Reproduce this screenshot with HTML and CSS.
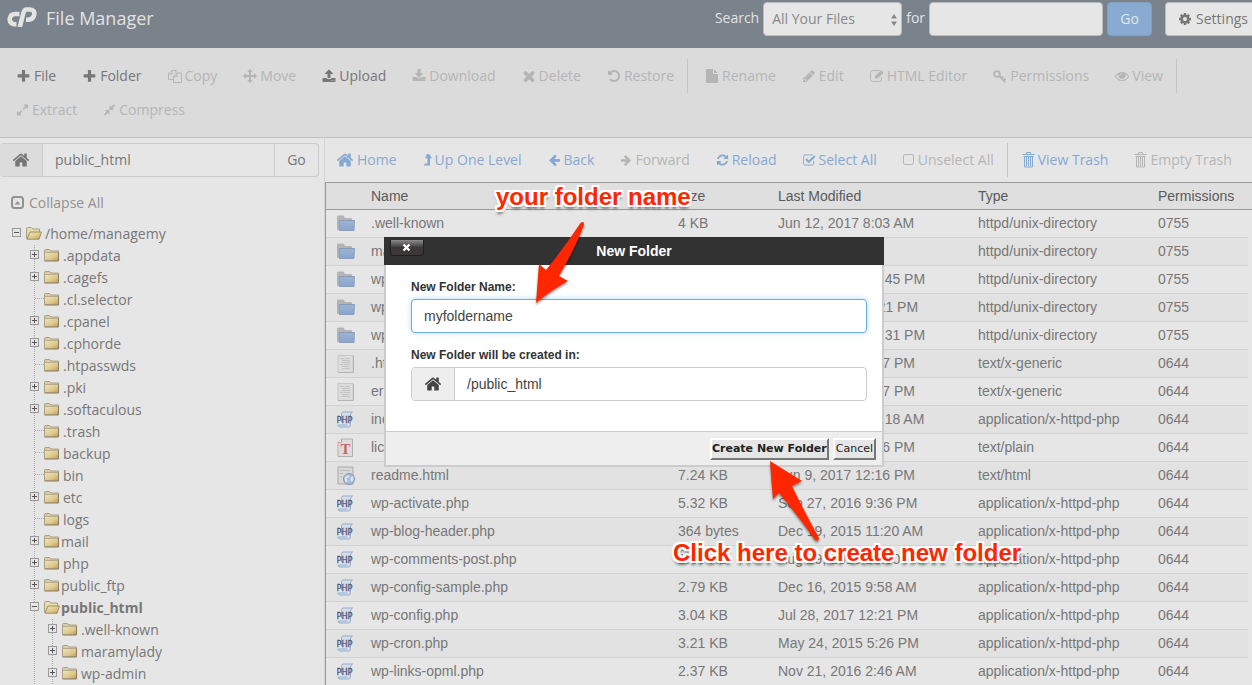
FILE: index.html
```html
<!DOCTYPE html>
<html lang="en">
<head>
<meta charset="utf-8">
<title>File Manager</title>
<link rel="stylesheet" href="styles.css">
</head>
<body>
<svg class="sprite" aria-hidden="true">
  <defs>
    <linearGradient id="gold" x1="0" y1="0" x2="1" y2="1"><stop offset="0" stop-color="#f0e4b8"/><stop offset=".6" stop-color="#dcc88c"/><stop offset="1" stop-color="#c09a50"/></linearGradient>
    <linearGradient id="blue" x1="0" y1="0" x2="0" y2="1"><stop offset="0" stop-color="#9db4d4"/><stop offset="1" stop-color="#8aa5cd"/></linearGradient>
    <symbol id="plus" viewBox="0 0 1792 1792"><path d="M1600 736v192q0 40-28 68t-68 28h-416v416q0 40-28 68t-68 28h-192q-40 0-68-28t-28-68v-416h-416q-40 0-68-28t-28-68v-192q0-40 28-68t68-28h416v-416q0-40 28-68t68-28h192q40 0 68 28t28 68v416h416q40 0 68 28t28 68z"/></symbol>
    <symbol id="home" viewBox="0 0 1792 1792"><path d="M1472 992v480q0 26-19 45t-45 19h-384v-384h-256v384h-384q-26 0-45-19t-19-45v-480q0-1 .5-3t.5-3l575-474 575 474q1 2 1 6zm223-69l-62 74q-8 9-21 11h-3q-13 0-21-7l-692-577-692 577q-12 8-24 7-13-2-21-11l-62-74q-8-10-7-23.5t11-21.5l719-599q32-26 76-26t76 26l244 204v-195q0-14 9-23t23-9h192q14 0 23 9t9 23v408l219 182q10 8 11 21.5t-7 23.5z"/></symbol>
    <symbol id="cog" viewBox="0 0 1792 1792"><path d="M1152 896q0-106-75-181t-181-75-181 75-75 181 75 181 181 75 181-75 75-181zm512-109v222q0 12-8 23t-20 13l-185 28q-19 54-39 91 35 50 107 138 10 12 10 25t-9 23q-27 37-99 108t-94 71q-12 0-26-9l-138-108q-44 23-91 38-16 136-29 186-7 28-36 28h-222q-14 0-24.5-8.5t-11.5-21.5l-28-184q-49-16-90-37l-141 107q-10 9-25 9-14 0-25-11-126-114-165-168-7-10-7-23 0-12 8-23 15-21 51-66.5t54-70.5q-27-50-41-99l-183-27q-13-2-21-12.5t-8-23.5v-222q0-12 8-23t19-13l186-28q14-46 39-92-40-57-107-138-10-12-10-24 0-10 9-23 26-36 98.5-107.5t94.5-71.5q13 0 26 10l138 107q44-23 91-38 16-136 29-186 7-28 36-28h222q14 0 24.5 8.5t11.5 21.5l28 184q49 16 90 37l142-107q9-9 24-9 13 0 25 10 129 119 165 170 7 8 7 22 0 12-8 23-15 21-51 66.5t-54 70.5q26 50 41 98l183 28q13 2 21 12.5t8 23.5z"/></symbol>
    <symbol id="left" viewBox="0 0 1792 1792"><path d="M1664 896v128q0 53-32.5 90.5t-84.5 37.5h-704l293 294q38 36 38 90t-38 90l-75 76q-37 37-90 37-52 0-91-37l-651-652q-37-37-37-90 0-52 37-91l651-650q38-38 91-38 52 0 90 38l75 74q38 38 38 91t-38 91l-293 293h704q52 0 84.5 37.5t32.5 90.5z"/></symbol>
    <symbol id="times" viewBox="160 160 1472 1472"><path d="M1490 1322q0 40-28 68l-136 136q-28 28-68 28t-68-28l-294-294-294 294q-28 28-68 28t-68-28l-136-136q-28-28-28-68t28-68l294-294-294-294q-28-28-28-68t28-68l136-136q28-28 68-28t68 28l294 294 294-294q28-28 68-28t68 28l136 136q28 28 28 68t-28 68l-294 294 294 294q28 28 28 68z"/></symbol>
    <symbol id="eye" viewBox="0 0 1792 1792"><path d="M1664 960q-152-236-381-353 61 104 61 225 0 185-131.5 316.5t-316.5 131.5-316.5-131.5-131.5-316.5q0-121 61-225-229 117-381 353 133 205 333.5 326.5t434.5 121.5 434.5-121.5 333.5-326.5zm-720-384q0-20-14-34t-34-14q-125 0-214.5 89.5t-89.5 214.5q0 20 14 34t34 14 34-14 14-34q0-86 61-147t147-61q20 0 34-14t14-34zm848 384q0 34-20 69-140 230-376.5 368.5t-499.5 138.5-499.5-139-376.5-368q-20-35-20-69t20-69q140-229 376.5-368t499.5-139 499.5 139 376.5 368q20 35 20 69z"/></symbol>
    <symbol id="refresh" viewBox="0 0 1792 1792"><path d="M1639 1056q0 5-1 7-64 268-268 434.5t-478 166.5q-146 0-282.5-55t-243.5-157l-129 129q-19 19-45 19t-45-19-19-45v-448q0-26 19-45t45-19h448q26 0 45 19t19 45-19 45l-137 137q71 66 161 102t187 36q134 0 250-65t186-179q11-17 53-117 8-23 30-23h192q13 0 22.500 9.500t9.500 22.500zm25-800v448q0 26-19 45t-45 19h-448q-26 0-45-19t-19-45 19-45l138-138q-148-137-349-137-134 0-250 65t-186 179q-11 17-53 117-8 23-30 23h-199q-13 0-22.500-9.500t-9.500-22.500v-7q65-268 270-434.500t480-166.500q146 0 284 55.500t245 156.500l130-129q19-19 45-19t45 19 19 45z"/></symbol>
    <symbol id="undo" viewBox="0 0 1792 1792"><path d="M1664 896q0 156-61 298t-164 245-245 164-298 61q-172 0-327-72.500t-264-204.500q-7-10-6.500-22.500t8.500-20.500l137-138q10-9 25-9 16 2 23 12 73 95 179 147t225 52q104 0 198.500-40.500t163.500-109.500 109.500-163.500 40.500-198.500-40.500-198.500-109.500-163.500-163.500-109.500-198.500-40.500q-98 0-188 35.500t-160 101.500l137 138q31 30 14 69-17 40-59 40h-448q-26 0-45-19t-19-45v-448q0-42 40-59 39-17 69 14l130 129q107-101 244.500-156.500t284.500-55.500q156 0 298 61t245 164 164 245 61 298z"/></symbol>
    <symbol id="pencil" viewBox="0 0 1792 1792"><path d="M491 1536l91-91-235-235-91 91v107h128v128h107zm523-928q0-22-22-22-10 0-17 7l-542 542q-7 7-7 17 0 22 22 22 10 0 17-7l542-542q7-7 7-17zm-54-192l416 416-832 832h-416v-416zm683 96q0 53-37 90l-166 166-416-416 166-165q36-38 90-38 53 0 91 38l235 234q37 39 37 91z"/></symbol>
    <symbol id="upload" viewBox="0 0 1792 1792"><path d="M1344 1472q0-26-19-45t-45-19-45 19-19 45 19 45 45 19 45-19 19-45zm256 0q0-26-19-45t-45-19-45 19-19 45 19 45 45 19 45-19 19-45zm128-224v320q0 40-28 68t-68 28h-1472q-40 0-68-28t-28-68v-320q0-40 28-68t68-28h427q21 56 70.500 92t110.500 36h256q61 0 110.500-36t70.500-92h427q40 0 68 28t28 68zm-325-648q-17 40-59 40h-256v448q0 26-19 45t-45 19h-256q-26 0-45-19t-19-45v-448h-256q-42 0-59-40-17-39 14-69l448-448q18-19 45-19t45 19l448 448q31 30 14 69z"/></symbol>
    <symbol id="download" viewBox="0 0 1792 1792"><path d="M1344 1344q0-26-19-45t-45-19-45 19-19 45 19 45 45 19 45-19 19-45zm256 0q0-26-19-45t-45-19-45 19-19 45 19 45 45 19 45-19 19-45zm128-224v320q0 40-28 68t-68 28h-1472q-40 0-68-28t-28-68v-320q0-40 28-68t68-28h465l135 136q58 56 136 56t136-56l136-136h464q40 0 68 28t28 68zm-325-569q17 41-14 70l-448 448q-18 19-45 19t-45-19l-448-448q-31-29-14-70 17-39 59-39h256v-448q0-26 19-45t45-19h256q26 0 45 19t19 45v448h256q42 0 59 39z"/></symbol>
    <symbol id="expand" viewBox="0 0 1792 1792"><path d="M883 1056q0 13-10 23l-332 332 144 144q19 19 19 45t-19 45-45 19h-448q-26 0-45-19t-19-45v-448q0-26 19-45t45-19 45 19l144 144 332-332q10-10 23-10t23 10l114 114q10 10 10 23zm781-864v448q0 26-19 45t-45 19-45-19l-144-144-332 332q-10 10-23 10t-23-10l-114-114q-10-10-10-23t10-23l332-332-144-144q-19-19-19-45t19-45 45-19h448q26 0 45 19t19 45z"/></symbol>
    <symbol id="compress" viewBox="0 0 1792 1792"><path d="M896 960v448q0 26-19 45t-45 19-45-19l-144-144-332 332q-10 10-23 10t-23-10l-114-114q-10-10-10-23t10-23l332-332-144-144q-19-19-19-45t19-45 45-19h448q26 0 45 19t19 45zm755-672q0 13-10 23l-332 332 144 144q19 19 19 45t-19 45-45 19h-448q-26 0-45-19t-19-45v-448q0-26 19-45t45-19 45 19l144 144 332-332q10-10 23-10t23 10l114 114q10 10 10 23z"/></symbol>
    <symbol id="arrows" viewBox="0 0 1792 1792"><path d="M1792 896q0 26-19 45l-256 256q-19 19-45 19t-45-19-19-45v-128h-384v384h128q26 0 45 19t19 45-19 45l-256 256q-19 19-45 19t-45-19l-256-256q-19-19-19-45t19-45 45-19h128v-384h-384v128q0 26-19 45t-45 19-45-19l-256-256q-19-19-19-45t19-45l256-256q19-19 45-19t45 19 19 45v128h384v-384h-128q-26 0-45-19t-19-45 19-45l256-256q19-19 45-19t45 19l256 256q19 19 19 45t-19 45-45 19h-128v384h384v-128q0-26 19-45t45-19 45 19l256 256q19 19 19 45z"/></symbol>
    <symbol id="file" viewBox="0 0 1792 1792"><path d="M1152 512v-472q22 14 36 28l408 408q14 14 28 36h-472zm-128 32q0 40 28 68t68 28h544v1056q0 40-28 68t-68 28h-1344q-40 0-68-28t-28-68v-1600q0-40 28-68t68-28h800v544z"/></symbol>
    <symbol id="copy" viewBox="0 0 14 14"><g fill="none" stroke="currentColor"><path d="M5 10.500H.5v-5.500L4 1.500h4v2.500M.5 5H4V1.500M5.500 7.500L9 4h4.500v9.500h-8zM5.500 7.500H9V4"/></g></symbol>
    <symbol id="edit" viewBox="0 0 14 14"><path fill="none" stroke="currentColor" d="M11.500 8.500v2q0 2-2 2h-7q-2 0-2-2v-7q0-2 2-2h7"/><path d="M5 7l6-5.800 2.600 2.500L7.600 9.500H5z"/></symbol>
    <symbol id="key" viewBox="0 0 14 14"><g fill="none" stroke="currentColor" stroke-width="1.800"><circle cx="4" cy="5" r="2.900"/><path d="M6.200 7l6 6M8.500 9.300l1.800-1.800M10.700 11.500l1.800-1.800"/></g></symbol>
    <symbol id="level" viewBox="0 0 9 14"><path d="M4 1h2l3 4.300H7V12.500H.5L2 10.500h2.500V5.300H2z"/></symbol>
    <symbol id="check" viewBox="0 0 14 14"><path fill="none" stroke="currentColor" d="M11.500 8v2.500q0 2-2 2h-7q-2 0-2-2v-7q0-2 2-2h8"/><path fill="none" stroke="currentColor" stroke-width="2.200" d="M3.200 6l3 3 6.600-6.400"/></symbol>
    <symbol id="square" viewBox="0 0 12 14"><rect x=".5" y="1.500" width="10" height="10" rx="1.800" fill="none" stroke="currentColor"/></symbol>
    <symbol id="trash" viewBox="0 0 13 16"><g fill="none" stroke="currentColor"><path d="M4.500 2.500v-2h4v2M.5 2.500h12M2.500 5v10h8V5"/><path d="M1.500 4.500h10M4.500 5v9M6.500 5v9M8.500 5v9" /></g></symbol>
    <symbol id="collapse" viewBox="0 0 14 14"><rect x="1" y="1" width="11" height="11" rx="2.500" fill="none" stroke="currentColor" stroke-width="2"/><path d="M3.500 8.500L6.500 5l3 3.500z"/></symbol>
    <symbol id="folder" viewBox="0 0 16 13"><path d="M.5 11.500v-10q0-1 1-1h4l1.500 1.500h7.500v9.500z" fill="#d8cda8" stroke="#a89f85"/><path d="M1 3.500h13.500v8H1z" fill="url(#gold)"/><path d="M1 3.500h13.500v8.500H.5" fill="none" stroke="#8b7d5f"/><path d="M.5 3.500h13.500" stroke="#b5ad93"/></symbol>
    <symbol id="open" viewBox="0 0 16 13"><path d="M.5 11.500v-10q0-1 1-1h4l1.500 1.500h6.500v9.500z" fill="#e6dbae" stroke="#a89f85"/><path d="M1 12.200L4 5h11.500l-2.500 7.200z" fill="url(#gold)" stroke="#a3905d"/></symbol>
    <symbol id="dir" viewBox="0 0 18 20"><path d="M0 16V2.500q0-1 1-1h5.500L8 4h6q1 0 1 1v11z" fill="#b4b4b4"/><path d="M2.500 16.500l-.5-10h15.500l-.5 10z" fill="url(#blue)" stroke="#8096b8" stroke-width=".8"/></symbol>
    <symbol id="doc" viewBox="0 0 18 20"><path d="M1 1.500h15v17H1z" fill="#dcdcdc" stroke="#c8c8c8"/><path d="M3 4.500h4M8 4.500h5M5 6.500h8M5 8.500h8M3 10.500h3M7 10.500h6M5 12.500h7M5 14.500h8" stroke="#c4c4c4"/><path d="M1 18.500h15.500V2" fill="none" stroke="#b5b5b5"/></symbol>
    <symbol id="plain" viewBox="0 0 18 20"><path d="M1 4.500L4.500 1H15.500v17.500H1z" fill="#dcdcdc" stroke="#b0b0b0"/><path d="M1 4.500h3.500V1" fill="#eee" stroke="#aaa"/><text x="8.500" y="16" class="glyph-t">T</text></symbol>
    <symbol id="web" viewBox="0 0 18 20"><path d="M1 1h15v17H1z" fill="#d9d9d9" stroke="#aaa"/><path d="M3 4.500h10M3 7.500h3M3 10.500h2" stroke="#bbb"/><circle cx="12" cy="13" r="5.500" fill="#a9bbd8" stroke="#8496b8"/><path d="M7.500 12q1.500-3 4-3l1 2-3 1 1 3-1 1.500q-2-1.500-2-4.500zM13 12l3-2 .5 4-2 2z" fill="#dde4ee"/></symbol>
    <symbol id="php" viewBox="0 0 18 20"><path d="M4.500 12V4q0-2 2-2h9q-2 1-2 3v9q0 3-2 3H3q-2 0-2-2h9" fill="#d6dde6" stroke="#8fb0d4"/><text x="7.500" y="13" class="glyph-php">PHP</text></symbol>
  </defs>
</svg>

<header class="topbar">
  <svg class="logo" viewBox="0 0 30 20" aria-hidden="true"><g fill="none" stroke="#e3e3e3" stroke-width="4.600"><path d="M12.500 7H8.500Q3.500 7 2.800 11.500T7 17.200H9.500"/><path d="M12.800 20L16.500 5.500Q17.300 2.500 19.500 2.500H23Q28 2.800 27.200 7.500T21.500 12.800H19"/></g></svg>
  <h1 class="title">File Manager</h1>
  <form class="search">
    <label for="scope">Search</label>
    <span class="select-wrap"><select id="scope"><option>All Your Files</option></select><svg viewBox="0 0 8 14" aria-hidden="true"><path d="M4 1l3 4.500H1zM4 13l3-4.500H1z"/></svg></span>
    <label for="term">for</label>
    <input id="term" type="text">
    <button class="go" type="button">Go</button>
  </form>
  <button class="settings" type="button"><svg class="i"><use href="#cog"/></svg>Settings</button>
</header>

<nav class="toolbar">
  <button class="tool on"><svg class="i wide"><use href="#plus"/></svg>File</button>
  <button class="tool on"><svg class="i wide"><use href="#plus"/></svg>Folder</button>
  <button class="tool"><svg class="i"><use href="#copy"/></svg>Copy</button>
  <button class="tool"><svg class="i"><use href="#arrows"/></svg>Move</button>
  <button class="tool on"><svg class="i"><use href="#upload"/></svg>Upload</button>
  <button class="tool"><svg class="i"><use href="#download"/></svg>Download</button>
  <button class="tool"><svg class="i"><use href="#times"/></svg>Delete</button>
  <button class="tool end"><svg class="i"><use href="#undo"/></svg>Restore</button>
  <button class="tool"><svg class="i"><use href="#file"/></svg>Rename</button>
  <button class="tool"><svg class="i"><use href="#pencil"/></svg>Edit</button>
  <button class="tool"><svg class="i"><use href="#edit"/></svg>HTML Editor</button>
  <button class="tool"><svg class="i"><use href="#key"/></svg>Permissions</button>
  <button class="tool end"><svg class="i"><use href="#eye"/></svg>View</button>
  <button class="tool"><svg class="i mid"><use href="#expand"/></svg>Extract</button>
  <button class="tool"><svg class="i mid"><use href="#compress"/></svg>Compress</button>
</nav>

<main class="main">
  <aside class="side">
    <form class="path">
      <span class="addon"><svg class="i big"><use href="#home"/></svg></span>
      <input type="text" value="public_html" aria-label="Path">
      <button type="button">Go</button>
    </form>
    <button class="collapse" type="button"><svg class="i"><use href="#collapse"/></svg>Collapse All</button>
    <ul class="tree">
      <li><div class="node"><button class="tg minus" aria-label="Collapse"></button><svg class="f"><use href="#open"/></svg><a href="#">/home/managemy</a></div>
      <ul class="kids">
        <li class="node"><button class="tg" aria-label="Expand"></button><svg class="f"><use href="#folder"/></svg><a href="#">.appdata</a></li>
        <li class="node"><button class="tg" aria-label="Expand"></button><svg class="f"><use href="#folder"/></svg><a href="#">.cagefs</a></li>
        <li class="node"><i class="leaf"></i><svg class="f"><use href="#folder"/></svg><a href="#">.cl.selector</a></li>
        <li class="node"><button class="tg" aria-label="Expand"></button><svg class="f"><use href="#folder"/></svg><a href="#">.cpanel</a></li>
        <li class="node"><button class="tg" aria-label="Expand"></button><svg class="f"><use href="#folder"/></svg><a href="#">.cphorde</a></li>
        <li class="node"><i class="leaf"></i><svg class="f"><use href="#folder"/></svg><a href="#">.htpasswds</a></li>
        <li class="node"><button class="tg" aria-label="Expand"></button><svg class="f"><use href="#folder"/></svg><a href="#">.pki</a></li>
        <li class="node"><button class="tg" aria-label="Expand"></button><svg class="f"><use href="#folder"/></svg><a href="#">.softaculous</a></li>
        <li class="node"><i class="leaf"></i><svg class="f"><use href="#folder"/></svg><a href="#">.trash</a></li>
        <li class="node"><i class="leaf"></i><svg class="f"><use href="#folder"/></svg><a href="#">backup</a></li>
        <li class="node"><i class="leaf"></i><svg class="f"><use href="#folder"/></svg><a href="#">bin</a></li>
        <li class="node"><button class="tg" aria-label="Expand"></button><svg class="f"><use href="#folder"/></svg><a href="#">etc</a></li>
        <li class="node"><i class="leaf"></i><svg class="f"><use href="#folder"/></svg><a href="#">logs</a></li>
        <li class="node tight"><button class="tg" aria-label="Expand"></button><svg class="f"><use href="#folder"/></svg><a href="#">mail</a></li>
        <li class="node"><button class="tg" aria-label="Expand"></button><svg class="f"><use href="#folder"/></svg><a href="#">php</a></li>
        <li class="node tight"><button class="tg" aria-label="Expand"></button><svg class="f"><use href="#folder"/></svg><a href="#">public_ftp</a></li>
        <li><div class="node tight"><button class="tg minus" aria-label="Collapse"></button><svg class="f"><use href="#open"/></svg><a href="#"><b>public_html</b></a></div>
        <ul class="kids">
          <li class="node"><button class="tg" aria-label="Expand"></button><svg class="f"><use href="#folder"/></svg><a href="#">.well-known</a></li>
          <li class="node"><button class="tg" aria-label="Expand"></button><svg class="f"><use href="#folder"/></svg><a href="#">maramylady</a></li>
          <li class="node"><button class="tg" aria-label="Expand"></button><svg class="f"><use href="#folder"/></svg><a href="#">wp-admin</a></li>
        </ul></li>
      </ul></li>
    </ul>
  </aside>

  <section class="content">
    <nav class="actions">
      <button class="tool link"><svg class="i big"><use href="#home"/></svg>Home</button>
      <button class="tool link"><svg class="i slim"><use href="#level"/></svg>Up One Level</button>
      <button class="tool link"><svg class="i mid"><use href="#left"/></svg>Back</button>
      <button class="tool"><svg class="i narrow flip"><use href="#left"/></svg>Forward</button>
      <button class="tool link"><svg class="i mid"><use href="#refresh"/></svg>Reload</button>
      <button class="tool link"><svg class="i mid"><use href="#check"/></svg>Select All</button>
      <button class="tool end"><svg class="i narrow"><use href="#square"/></svg>Unselect All</button>
      <button class="tool link"><svg class="i mid tall"><use href="#trash"/></svg>View Trash</button>
      <button class="tool"><svg class="i mid tall"><use href="#trash"/></svg>Empty Trash</button>
    </nav>
    <table class="files">
      <colgroup><col class="c-icon"><col><col class="c-size"><col class="c-date"><col class="c-type"><col class="c-perm"><col class="c-gutter"></colgroup>
      <thead><tr><th></th><th>Name</th><th>Size</th><th>Last Modified</th><th>Type</th><th>Permissions</th><th></th></tr></thead>
      <tbody>
        <tr><td><svg><use href="#dir"/></svg></td><td>.well-known</td><td>4 KB</td><td>Jun 12, 2017 8:03 AM</td><td>httpd/unix-directory</td><td>0755</td><td></td></tr>
        <tr><td><svg><use href="#dir"/></svg></td><td>maramylady</td><td>4 KB</td><td>Today 8:52 PM</td><td>httpd/unix-directory</td><td>0755</td><td></td></tr>
        <tr><td><svg><use href="#dir"/></svg></td><td>wp-admin</td><td>4 KB</td><td>Dec 19, 2016 12:45 PM</td><td>httpd/unix-directory</td><td>0755</td><td></td></tr>
        <tr><td><svg><use href="#dir"/></svg></td><td>wp-content</td><td>4 KB</td><td>Jul 28, 2017 12:21 PM</td><td>httpd/unix-directory</td><td>0755</td><td></td></tr>
        <tr><td><svg><use href="#dir"/></svg></td><td>wp-includes</td><td>12 KB</td><td>Dec 19, 2016 12:31 PM</td><td>httpd/unix-directory</td><td>0755</td><td></td></tr>
        <tr><td><svg><use href="#doc"/></svg></td><td>.htaccess</td><td>235 bytes</td><td>Jun 9, 2017 12:17 PM</td><td>text/x-generic</td><td>0644</td><td></td></tr>
        <tr><td><svg><use href="#doc"/></svg></td><td>error_log</td><td>2.15 KB</td><td>Jun 9, 2017 12:17 PM</td><td>text/x-generic</td><td>0644</td><td></td></tr>
        <tr><td><svg><use href="#php"/></svg></td><td>index.php</td><td>418 bytes</td><td>Sep 25, 2013 12:18 AM</td><td>application/x-httpd-php</td><td>0644</td><td></td></tr>
        <tr><td><svg><use href="#plain"/></svg></td><td>license.txt</td><td>19.47 KB</td><td>Jun 9, 2017 12:16 PM</td><td>text/plain</td><td>0644</td><td></td></tr>
        <tr><td><svg><use href="#web"/></svg></td><td>readme.html</td><td>7.24 KB</td><td>Jun 9, 2017 12:16 PM</td><td>text/html</td><td>0644</td><td></td></tr>
        <tr><td><svg><use href="#php"/></svg></td><td>wp-activate.php</td><td>5.32 KB</td><td>Sep 27, 2016 9:36 PM</td><td>application/x-httpd-php</td><td>0644</td><td></td></tr>
        <tr><td><svg><use href="#php"/></svg></td><td>wp-blog-header.php</td><td>364 bytes</td><td>Dec 19, 2015 11:20 AM</td><td>application/x-httpd-php</td><td>0644</td><td></td></tr>
        <tr><td><svg><use href="#php"/></svg></td><td>wp-comments-post.php</td><td>1.59 KB</td><td>Aug 29, 2016 12:00 PM</td><td>application/x-httpd-php</td><td>0644</td><td></td></tr>
        <tr><td><svg><use href="#php"/></svg></td><td>wp-config-sample.php</td><td>2.79 KB</td><td>Dec 16, 2015 9:58 AM</td><td>application/x-httpd-php</td><td>0644</td><td></td></tr>
        <tr><td><svg><use href="#php"/></svg></td><td>wp-config.php</td><td>3.04 KB</td><td>Jul 28, 2017 12:21 PM</td><td>application/x-httpd-php</td><td>0644</td><td></td></tr>
        <tr><td><svg><use href="#php"/></svg></td><td>wp-cron.php</td><td>3.21 KB</td><td>May 24, 2015 5:26 PM</td><td>application/x-httpd-php</td><td>0644</td><td></td></tr>
        <tr><td><svg><use href="#php"/></svg></td><td>wp-links-opml.php</td><td>2.37 KB</td><td>Nov 21, 2016 2:46 AM</td><td>application/x-httpd-php</td><td>0644</td><td></td></tr>
      </tbody>
    </table>
  </section>
</main>

<div class="dialog" role="dialog" aria-labelledby="dlg-title">
  <div class="dlg-head"><button class="close" type="button" aria-label="Close"><svg viewBox="0 0 10 10"><path d="M1.500 1.500l6 6M7.500 1.500l-6 6" stroke="#fff" stroke-width="2.400"/></svg></button><h2 id="dlg-title">New Folder</h2></div>
  <div class="dlg-body">
    <label for="fname">New Folder Name:</label>
    <input id="fname" class="field" type="text" value="myfoldername">
    <label for="fpath">New Folder will be created in:</label>
    <div class="group"><span class="addon"><svg class="i big"><use href="#home"/></svg></span><input id="fpath" type="text" value="/public_html"></div>
  </div>
  <div class="dlg-foot"><button class="btn strong" type="button">Create New Folder</button><button class="btn" type="button">Cancel</button></div>
</div>

<svg class="arrow arrow-name" viewBox="0 0 60 90" aria-hidden="true"><path d="M50.500 4q3.500-2.500 3.500 1.500Q46 28 29 57l9 5Q20 72 6 84L9 45l7 6Q34 29 50.500 4z"/></svg>
<p class="note note-name">your folder name</p>
<svg class="arrow arrow-create" viewBox="0 0 60 90" aria-hidden="true"><path d="M5 6l32 20-10 5Q38 54 54 83q0 4-4 2Q34 62 14 38L8 44Q6 24 5 6z"/></svg>
<p class="note note-create">Click here to create new folder</p>
</body>
</html>
```

FILE: styles.css
```css
* { box-sizing: border-box; }
body {
  margin: 0;
  height: 100vh;
  display: flex;
  flex-direction: column;
  overflow: hidden;
  position: relative;
  background: #e6e6e6;
  color: #777;
  font: 14px/22px "Open Sans", sans-serif;
}
button, input, select { font: inherit; color: inherit; margin: 0; }
button { background: none; border: 0; padding: 0; white-space: nowrap; }
.sprite { position: absolute; width: 0; height: 0; }
.i { width: 14px; height: 14px; fill: currentColor; flex: none; }
.i.wide { width: 15px; height: 15px; }
.i.big { width: 18px; height: 18px; }
.i.mid { width: 13px; }
.i.narrow { width: 12px; }
.i.slim { width: 9px; }
.i.tall { height: 16px; }
.i.flip { transform: scaleX(-1); }

.topbar { display: flex; align-items: flex-start; height: 48px; padding: 2px 0 0 7px; background: #7a828b; color: #e3e3e3; flex: none; }
.logo { width: 30px; height: 20px; margin-top: 5px; }
.title { margin: 0 0 0 9px; font-size: 18px; line-height: 32px; font-weight: 400; }
.search { display: flex; gap: 4px; margin-left: auto; line-height: 32px; }
.search input, .select-wrap, .settings { height: 34px; background: #e6e6e6; border: 1px solid #bbb; border-radius: 4px; color: #777; }
.search input { width: 174px; padding: 0 12px; }
.select-wrap { position: relative; width: 139px; }
.select-wrap select { appearance: none; width: 100%; height: 32px; border: 0; background: none; padding: 0 8px; color: #888; }
.select-wrap svg { position: absolute; right: 3px; top: 10px; width: 8px; height: 14px; fill: #888; pointer-events: none; }
.go { width: 45px; height: 34px; border-radius: 4px; background: #8aabd1; border: 1px solid #7ba0cb; color: #e6e6e6; }
.settings { display: flex; align-items: center; gap: 4px; margin-left: 13px; padding: 0 4px 0 12px; border-right: 0; border-radius: 4px 0 0 4px; }

.toolbar { display: flex; flex-wrap: wrap; padding: 11px 3px 10px; background: #dbdbdb; border-bottom: 1px solid #bfbfbf; flex: none; }
.tool { display: flex; align-items: center; gap: 3px; height: 34px; padding: 0 13px; color: #b5b5b5; }
.tool.on { color: #777; }
.tool.link { color: #86a9d2; }
.tool.end { border-right: 1px solid #c4c4c4; margin-right: 4px; }
.actions .tool.end { margin-right: 1px; }

.main { display: flex; flex: 1; min-height: 0; }
.side { width: 324px; flex: none; padding-top: 5px; }
.path, .group { display: flex; height: 34px; border: 1px solid #ccc; border-radius: 4px; overflow: hidden; }
.path { width: 319px; border-left: 0; }
.addon { width: 43px; flex: none; display: flex; align-items: center; justify-content: center; background: #dcdcdc; border-right: 1px solid #ccc; }
.path input, .group input { flex: 1; min-width: 0; border: 0; background: none; padding: 0 12px; outline: 0; }
.path button { width: 44px; border-left: 1px solid #ccc; }
.collapse { display: flex; align-items: center; gap: 4px; margin: 15px 0 9px 11px; color: #929292; }
.tree, .tree ul { list-style: none; margin: 0; padding: 0; }
.tree { padding-left: 12px; }
.tree .kids { padding-left: 18px; background: repeating-linear-gradient(#aaa 0 1px, transparent 1px 2px) 22px 0 / 1px 100% no-repeat; }
.node { display: flex; align-items: center; height: 22px; }
.node a { color: inherit; text-decoration: none; padding-left: 3px; }
.node.tight a { padding-left: 1px; }
.f { width: 16px; height: 13px; flex: none; margin-bottom: 2px; }
.tg { width: 9px; height: 9px; margin: 0 5px 3px 0; border: 1px solid #999; flex: none;
  background: linear-gradient(#555, #555) 1px 3px / 5px 1px no-repeat, linear-gradient(#555, #555) 3px 1px / 1px 5px no-repeat, #e6e6e6; }
.tg.minus { background: linear-gradient(#555, #555) 1px 3px / 5px 1px no-repeat, #e6e6e6; }
.leaf { width: 9px; height: 1px; margin: 0 0 3px 5px; flex: none; background: repeating-linear-gradient(90deg, #aaa 0 1px, transparent 1px 2px); }

.content { flex: 1; min-width: 0; border-left: 1px solid #d5d5d5; }
.actions { display: flex; padding: 5px 0; margin-left: -2px; }
.files { width: 100%; table-layout: fixed; border-collapse: separate; border-spacing: 0; border-left: 1px solid #999; font: 14px/16px "Liberation Sans", Arial, sans-serif; }
.c-icon { width: 33px; }
.c-size { width: 100px; }
.c-date { width: 200px; }
.c-type { width: 180px; }
.c-perm { width: 102px; }
.c-gutter { width: 4px; }
.files th, .files td { text-align: left; font-weight: 400; padding: 0 0 0 12px; white-space: nowrap; }
.files th { height: 28px; background: #dfdfdf; color: #5a5a5a; border-top: 1px solid #999; border-bottom: 1px solid #999; }
.files td { height: 28px; padding-bottom: 2px; border-bottom: 1px solid #d2d2d2; }
.files td:first-child { padding: 1px 0 0 11px; }
.files tr:nth-child(even) td { background: #e2e2e2; }
.files td:last-child, .files th:last-child { padding: 0; }
.files tbody td:last-child { border: 0; background: #e6e6e6; }
.files svg { display: block; width: 18px; height: 20px; }
.glyph-t { font: bold 15px "Liberation Serif", serif; fill: #c8685c; text-anchor: middle; }
.glyph-php { font: 9px "DejaVu Sans Condensed", "DejaVu Sans", sans-serif; fill: #4b5878; stroke: #4b5878; stroke-width: .3px; text-anchor: middle; }

.dialog { position: absolute; left: calc(50% - 242px); top: 237px; width: 500px; background: #fff; border: solid #ccc; border-width: 0 2px 2px; color: #444; font: 14px/16px "Liberation Sans", Arial, sans-serif; }
.dlg-head { height: 28px; margin: 0 -2px; background: #323232; color: #fff; position: relative; }
.dlg-head h2 { margin: 0; font-size: 14px; line-height: 28px; text-align: center; }
.close { position: absolute; left: 6px; top: 3px; width: 34px; height: 16px; display: flex; align-items: center; justify-content: center; border: 1px solid #1c2022; border-top: 0; border-radius: 0 0 4px 4px; background: linear-gradient(#8c8c8c, #3c3838 50%, #3c3838); }
.close svg { width: 10px; height: 10px; }
.dlg-body { padding: 13px 15px 30px 25px; }
.dlg-body label { display: block; font-size: 12px; font-weight: 700; line-height: 18px; margin-bottom: 3px; color: #333; }
.field { display: block; width: 100%; height: 34px; padding: 0 12px; border: 1px solid #66afe9; border-radius: 4px; margin-bottom: 13px; outline: 0; box-shadow: 0 0 5px rgba(102, 175, 233, .5); }
.group .addon { background: #eee; }
.dlg-foot { display: flex; justify-content: flex-end; gap: 4px; padding: 6px 6px 5px; background: #eee; border-top: 1px solid #ccc; }
.btn { height: 22px; padding: 0 1px; background: #e6e6e6; border: 2px solid; border-color: #fff #777 #777 #fff; font: 11px/18px Verdana, "DejaVu Sans", sans-serif; color: #222; }
.btn.strong { font-weight: 700; padding: 0; }

.note { position: absolute; margin: 0; color: #ff2600; font: bold 24px/28px "Liberation Sans", Arial, sans-serif; white-space: nowrap;
  text-shadow: 2px 0 #fff, -2px 0 #fff, 0 2px #fff, 0 -2px #fff, 2px 2px #fff, -2px 2px #fff, 2px -2px #fff, -2px -2px #fff, 0 4px 3px #666; }
.note-name { left: 496px; top: 183px; }
.note-create { left: 673px; top: 539px; }
.arrow { position: absolute; width: 60px; height: 90px; fill: #ff2600; filter: drop-shadow(0 2px 1px rgba(0, 0, 0, .4)); }
.arrow-name { left: 530px; top: 219px; }
.arrow-create { left: 765px; top: 455px; }
```
